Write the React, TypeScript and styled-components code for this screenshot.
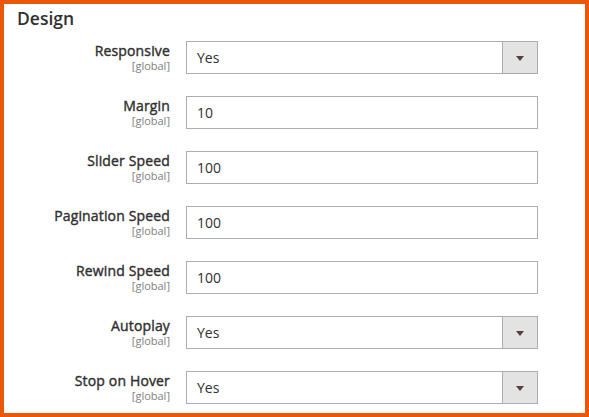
import { createGlobalStyle, styled } from "styled-components";

const GlobalStyle = createGlobalStyle`
	html, body {
		margin: 0;
		padding: 0;
		background: #ffffff;
	}
	body {
		font-family: "Open Sans", "Noto Sans", sans-serif;
		color: #303030;
	}
`;

const Frame = styled.section`
	box-sizing: border-box;
	width: 100%;
	border: 4px solid #ea5709;
	padding: 4px 0 9px;
	background: #fff;
`;

const Heading = styled.h2`
	margin: 0 0 13px;
	padding-left: 13px;
	font-size: 17.5px;
	line-height: 20px;
	font-weight: 600;
	color: #303030;
`;

const Fields = styled.div`
	display: flex;
	flex-direction: column;
	gap: 22px;
`;

const Row = styled.div`
	display: grid;
	grid-template-columns: 166px 352px;
	column-gap: 16px;
	align-items: start;
`;

const LabelCol = styled.div`
	display: flex;
	flex-direction: column;
	align-items: flex-end;
	text-align: right;
`;

// semibold look: the regular cut with a thin stroke
const Label = styled.label`
	font-size: 14px;
	line-height: 19px;
	font-weight: 400;
	letter-spacing: 0.15px;
	-webkit-text-stroke: 0.4px #303030;
	color: #303030;
`;

const Scope = styled.span`
	font-size: 11px;
	line-height: 12px;
	color: #808080;
`;

const TextInput = styled.input`
	box-sizing: border-box;
	width: 100%;
	height: 33px;
	margin: 0;
	padding: 0 10px;
	border: 1px solid #adadad;
	border-radius: 0;
	font-family: "Open Sans", "Noto Sans", sans-serif;
	font-size: 14px;
	color: #303030;
	background: #fff;
	outline: none;
`;

const SelectBox = styled.div`
	box-sizing: border-box;
	display: flex;
	width: 100%;
	height: 33px;
	border: 1px solid #adadad;
	background: #fff;
`;

const SelectValue = styled.span`
	flex: 1;
	display: flex;
	align-items: center;
	padding: 0 10px;
	font-size: 14px;
	color: #303030;
`;

const Toggle = styled.span`
	width: 34px;
	display: flex;
	align-items: center;
	justify-content: center;
	border-left: 1px solid #adadad;
	background: #e3e3e3;
`;

const Arrow = styled.span`
	width: 0;
	height: 0;
	margin-top: 2px;
	border-left: 4px solid transparent;
	border-right: 4px solid transparent;
	border-top: 5px solid #5a3f39;
`;

type Field = { label: string; value: string; select?: boolean };

const fields: Field[] = [
	{ label: "Responsive", value: "Yes", select: true },
	{ label: "Margin", value: "10" },
	{ label: "Slider Speed", value: "100" },
	{ label: "Pagination Speed", value: "100" },
	{ label: "Rewind Speed", value: "100" },
	{ label: "Autoplay", value: "Yes", select: true },
	{ label: "Stop on Hover", value: "Yes", select: true },
];

export default function App() {
	return (
		<>
			<GlobalStyle />
			<Frame>
				<Heading>Design</Heading>
				<Fields>
					{fields.map((f) => (
						<Row key={f.label}>
							<LabelCol>
								<Label>{f.label}</Label>
								<Scope>[global]</Scope>
							</LabelCol>
							{f.select ? (
								<SelectBox>
									<SelectValue>{f.value}</SelectValue>
									<Toggle>
										<Arrow />
									</Toggle>
								</SelectBox>
							) : (
								<TextInput defaultValue={f.value} />
							)}
						</Row>
					))}
				</Fields>
			</Frame>
		</>
	);
}
